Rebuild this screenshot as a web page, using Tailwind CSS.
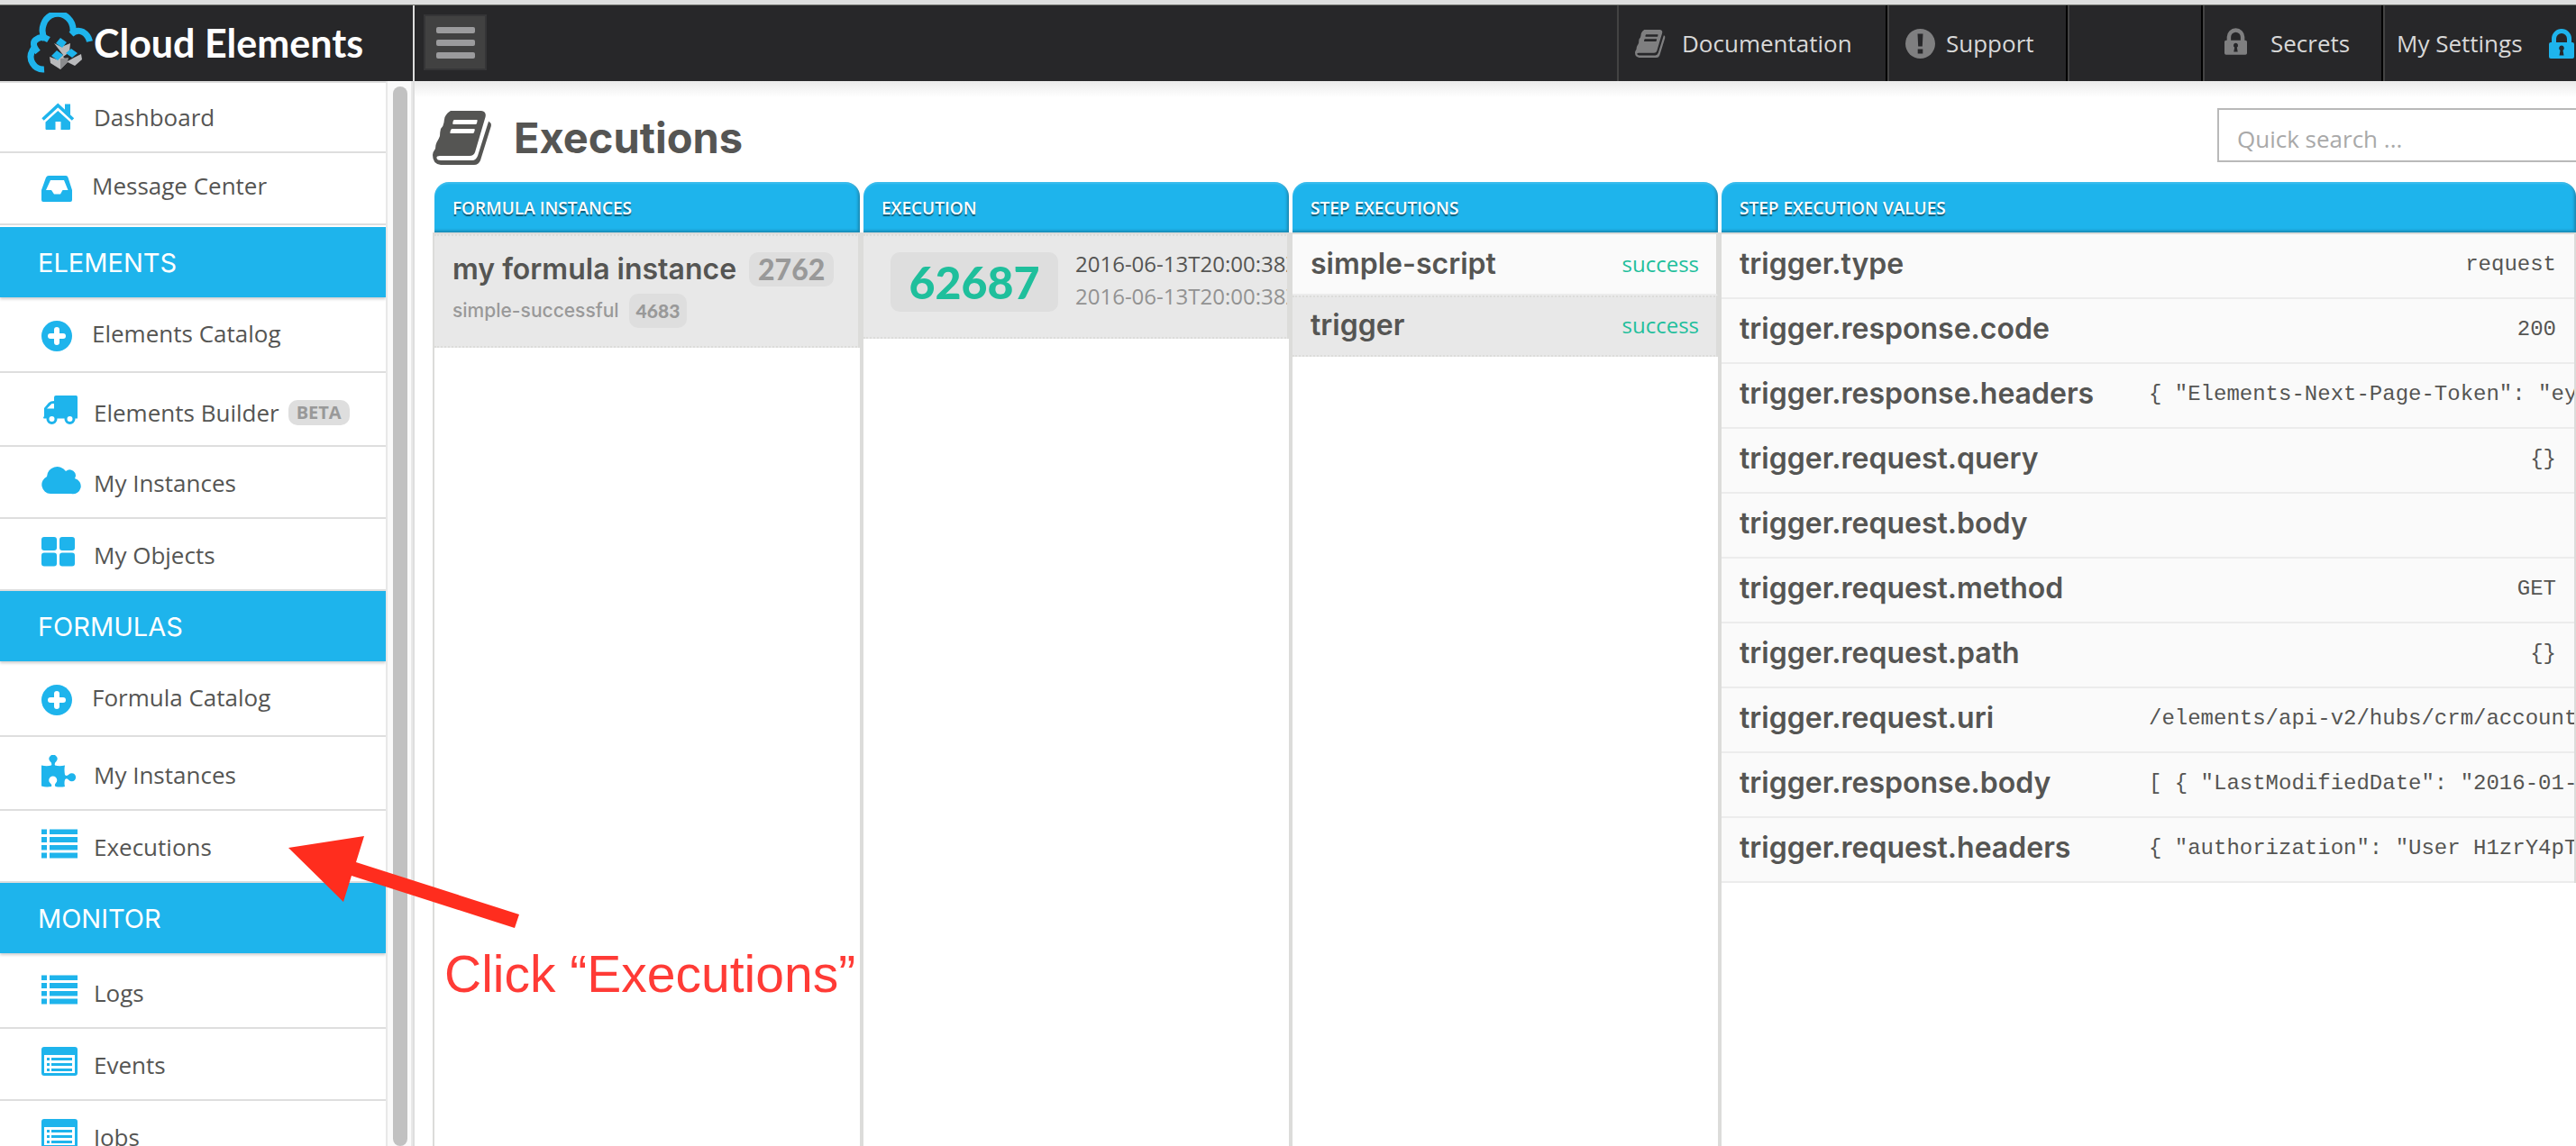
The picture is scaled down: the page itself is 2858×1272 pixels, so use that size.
<!DOCTYPE html>
<html lang="en">
<head>
<meta charset="utf-8">
<meta name="viewport" content="width=device-width, initial-scale=1">
<title>Cloud Elements - Executions</title>
<script src="https://cdn.jsdelivr.net/npm/@tailwindcss/browser@4"></script>
</head>
<body class="relative flex h-screen flex-col overflow-hidden bg-white font-['Open_Sans',sans-serif] text-[26px] leading-[36px] text-[#555553]">

<svg class="hidden" aria-hidden="true">
  <symbol id="book" viewBox="0 0 66 60">
    <path fill="currentColor" d="M20 0H54Q60 1 58.500 7L47 46Q45.500 50 41 50H8Q4 50 4.500 52.500Q5 55 9 55H44Q48 55 50 50L61 15Q62 12.500 62 11.500Q66 14 64.500 18L53 55Q51 60 46 60H9Q0 59 0 49Q0 46 3 42Q3 38 4.500 35Q7 31 8 28Q8 24 9 20Q12 17 12.500 13Q13 9 13.500 7Q16 2 20 0Z"/>
    <path class="fill-(--line)" d="M24 10H49Q50 10 49.500 11.500L49 14Q48.500 15 47.500 15H23Q22 15 22.300 13.500L22.700 11.500Q23 10 24 10ZM21.500 20H46Q47 20 46.700 21.500L46 24Q45.500 25 44.500 25H20.500Q19 25 19.500 23.500L20 21.500Q20.500 20 21.500 20Z"/>
  </symbol>
  <symbol id="lock" viewBox="0 0 28 33">
    <path fill="currentColor" fill-rule="evenodd" d="M3 15V11A11 11 0 0 1 25 11V15H26Q28 15 28 17V31Q28 33 26 33H2Q0 33 0 31V17Q0 15 2 15ZM8 15H20V11A6 6 0 0 0 8 11ZM14 18.500A3 3 0 0 0 12.500 24L11.500 29.500H16.500L15.500 24A3 3 0 0 0 14 18.500Z"/>
  </symbol>
  <symbol id="plus" viewBox="0 -4 44 44">
    <circle cx="17" cy="21" r="17" fill="currentColor"/>
    <path stroke="#fff" stroke-width="6" stroke-linecap="round" d="M17 14V28M10 21H24"/>
  </symbol>
  <symbol id="list" viewBox="0 -4 44 44">
    <path fill="currentColor" d="M0-1.500h6v5.500H0zM9-1.500h31v5.500H9zM0 7h6v6H0zM9 7h31v6H9zM0 16h6v5.500H0zM9 16h31v5.500H9zM0 24.500h6v6H0zM9 24.500h31v6H9z"/>
  </symbol>
  <symbol id="listalt" viewBox="0 -4 44 44">
    <path fill="currentColor" fill-rule="evenodd" d="M3-2H37Q40-2 40 1V27Q40 30 37 30H3Q0 30 0 27V1Q0-2 3-2ZM3 7V27H37V7ZM6 10H9V13H6ZM11 10H34V13H11ZM6 16H9V19H6ZM11 16H34V19H11ZM6 22H9V25H6ZM11 22H34V25H11Z"/>
  </symbol>
</svg>

<div class="h-[6px] shrink-0 border-b border-[#6f716c] bg-[#dedede]"></div>

<header class="flex h-[84px] shrink-0 bg-[#272729] text-[#d8d8d8]">
  <a href="#" class="flex w-[460px] shrink-0 items-center border-r-2 border-[#dedede] pl-[26px]">
    <svg class="h-[68px] w-[78px] shrink-0" viewBox="26 13 78 68" fill="none">
      <g stroke="#1eb4ec" stroke-width="7">
        <path d="M49 76A14 14 0 0 1 36 55Q37 53 38.500 52"/>
        <path d="M42 57Q34 47 40 43Q46 38 54 43"/>
        <path d="M50 43A17 18.500 0 1 1 81 35"/>
        <path d="M79 37Q85 31 92 34.500Q98 38 99.500 45"/>
      </g>
      <path fill="#b9babc" d="M60 47L68 51L78 47L77 57L70 62L75 67L82 63L90 59L91 65L83 72L75 68L67 76L56 69L55 62L63 65L70 60Z"/>
      <path fill="#8b8c8e" d="M67 64L76 63L75 68L67 76Z"/>
      <path fill="#1eb4ec" d="M67 41L74 46L69 52L62 47ZM63 55L70 60L64 66L57 61ZM79 53L86 58L80 63L73 58Z"/>
    </svg>
    <span class="font-['Lato',sans-serif] text-[43px] font-bold leading-[48px] text-white">Cloud Elements</span>
  </a>
  <button type="button" aria-label="Toggle menu" class="mt-[10px] ml-[10px] flex h-[62px] w-[70px] flex-col items-center justify-center gap-[7px] border-2 border-[#353537] bg-[#414141]">
    <span class="h-[7px] w-[43px] rounded-xs bg-[#9b9b9d]"></span>
    <span class="h-[7px] w-[43px] rounded-xs bg-[#9b9b9d]"></span>
    <span class="h-[7px] w-[43px] rounded-xs bg-[#9b9b9d]"></span>
  </button>
  <nav class="ml-auto flex" aria-label="Account">
    <a href="#" class="flex w-[300px] items-center border-r-2 border-l-2 border-r-black border-l-[#434343] pl-[18px]">
      <svg class="mr-[18px] h-[33px] w-[34px] text-[#7f7f80] [--line:#272729]"><use href="#book"/></svg>Documentation</a>
    <a href="#" class="flex w-[200px] items-center border-r-2 border-l-2 border-r-black border-l-[#434343] pl-[18px]">
      <svg class="mr-[12px] h-[33px] w-[33px]" viewBox="0 0 33 33"><circle cx="16.500" cy="16.500" r="16.500" fill="#7f7f80"/><path fill="#272729" d="M13.500 5.500h6l-.700 14h-4.600zM13.700 22.500h5.600v5h-5.600z"/></svg>Support</a>
    <span class="w-[150px] border-r-2 border-l-2 border-r-black border-l-[#434343]"></span>
    <a href="#" class="flex w-[200px] items-center border-r-2 border-l-2 border-r-black border-l-[#434343] pl-[22px]">
      <svg class="mr-[26px] mb-1 h-[30px] w-[25px] text-[#7f7f80]"><use href="#lock"/></svg>Secrets</a>
    <a href="#" class="flex w-[214px] items-center justify-between border-l-2 border-[#434343] pr-[2px] pl-[13px]">My Settings
      <svg class="h-[33px] w-[28px] text-[#1eb4ec]"><use href="#lock"/></svg></a>
  </nav>
</header>

<div class="flex min-h-0 flex-1">
  <aside class="flex w-[460px] shrink-0 border-r-2 border-[#dedede]">
    <nav class="flex-1 overflow-hidden border-t-2 border-[#dedede]" aria-label="Main">
      <a href="#" class="flex h-[78px] border-b-2 border-[#dedede] pt-[16px] pl-[46px] leading-[44px]">
        <svg class="mr-[14px] h-[44px] w-[44px] text-[#1eb4ec]" viewBox="0 -4 44 44"><path stroke="currentColor" stroke-width="3.500" fill="none" d="M1.500 20.500L18.300 5L35 20.500"/><path fill="currentColor" d="M26 3.500H32V16L26 10.500ZM18.300 11L32 23.500V31Q32 32 31 32H21.500V23H15.500V32H5.500Q4.500 32 4.500 31V23.500Z"/></svg>Dashboard</a>
      <a href="#" class="flex h-[80px] border-b-2 border-[#dedede] pt-[14px] pl-[46px] leading-[44px]">
        <svg class="mr-[12px] h-[44px] w-[44px] text-[#1eb4ec]" viewBox="0 -4 44 44"><path fill="currentColor" fill-rule="evenodd" d="M8 7H27Q29 7 29.500 9L34 23V34Q34 36 32 36H2Q0 36 0 34V23L5 9Q6 7 8 7ZM10 12L5 23H11L14 27.500H21L23.500 23H29.500L25 12Z"/></svg>Message Center</a>
      <h2 class="relative mt-[2px] h-[78px] bg-[#1eb4ec] pl-[42px] font-['Inter',sans-serif] text-[29px] leading-[80px] text-white shadow-[0_2px_3px_rgba(0,0,0,0.2)]">ELEMENTS</h2>
      <a href="#" class="flex h-[84px] border-b-2 border-[#dedede] pt-[18px] pl-[46px] leading-[44px]">
        <svg class="mr-[12px] h-[44px] w-[44px] text-[#1eb4ec]"><use href="#plus"/></svg>Elements Catalog</a>
      <a href="#" class="flex h-[82px] border-b-2 border-[#dedede] pt-[22px] pl-[46px] leading-[44px]">
        <svg class="mr-[14px] h-[44px] w-[44px] text-[#1eb4ec]" viewBox="0 -4 44 44"><path fill="currentColor" fill-rule="evenodd" d="M16-1H38.500Q40 -1 40 1V24.500H3Q1 24.500 3 22V13L8 7Q10 5 14 5V1Q14-1 16-1ZM6 13.500H14V8H11.500Z"/><g fill="#fff" stroke="currentColor" stroke-width="3"><circle cx="11.500" cy="25" r="4.500"/><circle cx="31.500" cy="25" r="4.500"/></g></svg>Elements Builder
        <span class="mt-[8px] ml-[10px] h-[28px] rounded-[10px] bg-[#dedede] px-[9px] text-[20px] leading-[28px] font-bold text-[#999]">BETA</span></a>
      <a href="#" class="flex h-[80px] border-b-2 border-[#dedede] pt-[18px] pl-[46px] leading-[44px]">
        <svg class="mr-[14px] h-[44px] w-[44px] text-[#1eb4ec]" viewBox="0 -4 44 44"><path fill="currentColor" d="M10 30A10 10 0 0 1 6 11A11.500 11.500 0 0 1 27 5A6.500 6.500 0 0 1 37 13A8.600 8.600 0 0 1 33 30Z"/></svg>My Instances</a>
      <a href="#" class="flex h-[80px] border-b-2 border-[#dedede] pt-[18px] pl-[46px] leading-[44px]">
        <svg class="mr-[14px] h-[44px] w-[44px] text-[#1eb4ec]" viewBox="0 -4 44 44" fill="currentColor"><rect y="-2" width="17" height="15" rx="3"/><rect x="20" y="-2" width="17" height="15" rx="3"/><rect y="15.500" width="17" height="15" rx="3"/><rect x="20" y="15.500" width="17" height="15" rx="3"/></svg>My Objects</a>
      <h2 class="relative h-[78px] bg-[#1eb4ec] pl-[42px] font-['Inter',sans-serif] text-[29px] leading-[80px] text-white shadow-[0_2px_3px_rgba(0,0,0,0.2)]">FORMULAS</h2>
      <a href="#" class="flex h-[84px] border-b-2 border-[#dedede] pt-[18px] pl-[46px] leading-[44px]">
        <svg class="mr-[12px] h-[44px] w-[44px] text-[#1eb4ec]"><use href="#plus"/></svg>Formula Catalog</a>
      <a href="#" class="flex h-[82px] border-b-2 border-[#dedede] pt-[20px] pl-[46px] leading-[44px]">
        <svg class="mr-[14px] h-[44px] w-[44px] text-[#1eb4ec]" viewBox="0 -4 44 44"><path fill="currentColor" d="M0 7.500Q6 9 11 7.500Q12 5 9.500 3A4.500 4.500 0 1 1 16.500 3Q14 5 15 7.500Q20 9 26 7.500Q25 12 26 18Q28 20 30.500 17.500A4.500 4.500 0 1 1 30.500 24Q28 21 26 23.500Q25 27 26 31Q21 32 15.500 31Q14 29 16 27A4.500 4.500 0 1 0 9.500 27Q12 29 11 31Q5 32 0 30.500Z"/></svg>My Instances</a>
      <a href="#" class="flex h-[80px] border-b-2 border-[#dedede] pt-[18px] pl-[46px] leading-[44px]">
        <svg class="mr-[14px] h-[44px] w-[44px] text-[#1eb4ec]"><use href="#list"/></svg>Executions</a>
      <h2 class="relative h-[78px] bg-[#1eb4ec] pl-[42px] font-['Inter',sans-serif] text-[29px] leading-[80px] text-white shadow-[0_2px_3px_rgba(0,0,0,0.2)]">MONITOR</h2>
      <a href="#" class="flex h-[84px] border-b-2 border-[#dedede] pt-[22px] pl-[46px] leading-[44px]">
        <svg class="mr-[14px] h-[44px] w-[44px] text-[#1eb4ec]"><use href="#list"/></svg>Logs</a>
      <a href="#" class="flex h-[80px] border-b-2 border-[#dedede] pt-[18px] pl-[46px] leading-[44px]">
        <svg class="mr-[14px] h-[44px] w-[44px] text-[#1eb4ec]"><use href="#listalt"/></svg>Events</a>
      <a href="#" class="flex h-[80px] border-b-2 border-[#dedede] pt-[18px] pl-[46px] leading-[44px]">
        <svg class="mr-[14px] h-[44px] w-[44px] text-[#1eb4ec]"><use href="#listalt"/></svg>Jobs</a>
    </nav>
    <div class="w-[30px] border-x-2 border-[#e8e8e8] bg-[#fafafa] px-[6px] pt-[6px]">
      <div class="h-full w-[16px] rounded-full bg-[#c1c1c1]"></div>
    </div>
  </aside>

  <main class="flex min-w-0 flex-1 flex-col bg-linear-to-b from-[#ebebeb] to-white to-[18px] pl-[20px]">
    <div class="flex h-[112px] shrink-0 items-start">
      <svg class="mt-[33px] h-[60px] w-[66px] [--line:#fff]"><use href="#book"/></svg>
      <h1 class="mt-[35px] ml-[24px] font-['Inter',sans-serif] text-[47px] leading-[56px] font-bold">Executions</h1>
      <input type="search" aria-label="Quick search" placeholder="Quick search ..." class="mt-[30px] ml-auto h-[60px] w-[398px] border-2 border-r-0 border-[#b9b9b9] bg-white pt-[8px] pl-[20px] placeholder:text-[#a9a9a9]">
    </div>

    <div class="flex min-h-0 flex-1">
      <section class="flex w-[476px] shrink-0 flex-col">
        <h2 class="mx-[2px] h-[56px] shrink-0 rounded-t-[16px] bg-[#1eb4ec] pl-[20px] text-[19px] leading-[58px] font-semibold text-white shadow-[inset_-2px_-2px_3px_rgba(0,0,0,0.25),inset_0_2px_2px_rgba(255,255,255,0.15)] text-shadow-[0_2px_1px_rgba(0,0,0,0.5)]">FORMULA INSTANCES</h2>
        <div class="min-h-0 flex-1 border-x-2 border-t-2 border-[#dcdcda]">
          <a href="#" class="flex h-[126px] flex-col gap-[8px] border-y-2 border-r-2 border-[#dcdcda] bg-[#e8e8e8] [border-block-style:dotted] pt-[18px] pl-[20px] font-['Inter',sans-serif]">
            <span class="flex h-[38px] gap-[14px] text-[32px] leading-[38px] font-semibold">my formula instance
              <b class="rounded-[10px] bg-[#dedede] px-[10px] font-['Lato',sans-serif] font-black text-[#999]">2762</b></span>
            <span class="flex h-[38px] gap-[11px] text-[21px] leading-[38px] font-medium text-[#999]">simple-successful
              <b class="rounded-[10px] bg-[#dedede] px-[8px] font-['Lato',sans-serif] font-black">4683</b></span>
          </a>
        </div>
      </section>

      <section class="flex w-[476px] shrink-0 flex-col">
        <h2 class="mx-[2px] h-[56px] shrink-0 rounded-t-[16px] bg-[#1eb4ec] pl-[20px] text-[19px] leading-[58px] font-semibold text-white shadow-[inset_-2px_-2px_3px_rgba(0,0,0,0.25),inset_0_2px_2px_rgba(255,255,255,0.15)] text-shadow-[0_2px_1px_rgba(0,0,0,0.5)]">EXECUTION</h2>
        <div class="min-h-0 flex-1 border-x-2 border-t-2 border-[#dcdcda]">
          <a href="#" class="flex h-[116px] gap-[19px] overflow-hidden border-y-2 border-r-2 border-[#dcdcda] bg-[#e8e8e8] [border-block-style:dotted] pt-[13px] pl-[30px] text-[24px]">
            <b class="mt-[5px] h-[66px] w-[186px] shrink-0 rounded-[10px] bg-[#dedede] text-center font-['Lato',sans-serif] text-[50px] leading-[66px] font-black text-[#1fbf9c]">62687</b>
            <span class="flex shrink-0 flex-col whitespace-nowrap"><span>2016-06-13T20:00:38Z</span><span class="text-[#929292]">2016-06-13T20:00:38Z</span></span>
          </a>
        </div>
      </section>

      <section class="flex w-[476px] shrink-0 flex-col">
        <h2 class="mx-[2px] h-[56px] shrink-0 rounded-t-[16px] bg-[#1eb4ec] pl-[20px] text-[19px] leading-[58px] font-semibold text-white shadow-[inset_-2px_-2px_3px_rgba(0,0,0,0.25),inset_0_2px_2px_rgba(255,255,255,0.15)] text-shadow-[0_2px_1px_rgba(0,0,0,0.5)]">STEP EXECUTIONS</h2>
        <div class="min-h-0 flex-1 border-x-2 border-t-2 border-[#dcdcda]">
          <a href="#" class="flex h-[68px] items-center justify-between border-r-2 border-b-2 border-r-[#dcdcda] border-b-[#ececec] bg-[#fafafa] pr-[19px] pl-[20px]">
            <span class="font-['Inter',sans-serif] text-[32px] font-semibold">simple-script</span>
            <span class="text-[24px] text-[#1fbf9c]">success</span></a>
          <a href="#" class="flex h-[68px] items-center justify-between border-y-2 border-r-2 border-[#dcdcda] bg-[#e8e8e8] [border-block-style:dotted] pr-[19px] pb-[2px] pl-[20px]">
            <span class="font-['Inter',sans-serif] text-[32px] font-semibold">trigger</span>
            <span class="text-[24px] text-[#1fbf9c]">success</span></a>
        </div>
      </section>

      <section class="flex min-w-0 flex-1 flex-col">
        <h2 class="ml-[2px] h-[56px] shrink-0 rounded-t-[16px] bg-[#1eb4ec] pl-[20px] text-[19px] leading-[58px] font-semibold text-white shadow-[inset_-2px_-2px_3px_rgba(0,0,0,0.25),inset_0_2px_2px_rgba(255,255,255,0.15)] text-shadow-[0_2px_1px_rgba(0,0,0,0.5)]">STEP EXECUTION VALUES</h2>
        <div class="min-h-0 flex-1 border-t-2 border-l-2 border-[#dcdcda]">
          <table class="w-full table-fixed border-separate border-spacing-0 border-r-2 border-[#dcdcda] bg-[#fafafa] text-left font-['Liberation_Mono',monospace] text-[24px] whitespace-nowrap [&_td]:h-[72px] [&_td]:overflow-hidden [&_td]:border-b-2 [&_td]:border-[#ececec] [&_td]:pb-[2px] [&_th]:h-[72px] [&_th]:w-[474px] [&_th]:border-b-2 [&_th]:border-[#ececec] [&_th]:pb-[4px] [&_th]:pl-[20px] [&_th]:font-['Inter',sans-serif] [&_th]:text-[32px] [&_th]:font-semibold">
            <tbody>
              <tr><th scope="row">trigger.type</th><td class="pr-[20px] text-right">request</td></tr>
              <tr><th scope="row">trigger.response.code</th><td class="pr-[20px] text-right">200</td></tr>
              <tr><th scope="row">trigger.response.headers</th><td>{ "Elements-Next-Page-Token": "eyJ</td></tr>
              <tr><th scope="row">trigger.request.query</th><td class="pr-[20px] text-right">{}</td></tr>
              <tr><th scope="row">trigger.request.body</th><td></td></tr>
              <tr><th scope="row">trigger.request.method</th><td class="pr-[20px] text-right">GET</td></tr>
              <tr><th scope="row">trigger.request.path</th><td class="pr-[20px] text-right">{}</td></tr>
              <tr><th scope="row">trigger.request.uri</th><td>/elements/api-v2/hubs/crm/accounts</td></tr>
              <tr><th scope="row">trigger.response.body</th><td>[ { "LastModifiedDate": "2016-01-1</td></tr>
              <tr><th scope="row">trigger.request.headers</th><td>{ "authorization": "User H1zrY4pTf</td></tr>
            </tbody>
          </table>
        </div>
      </section>
    </div>
  </main>
</div>

<!-- Tutorial annotation laid over the page -->
<svg class="absolute top-[928px] left-[320px] h-[102px] w-[256px]" viewBox="0 0 256 102" aria-hidden="true"><path fill="#ff2d1e" d="M0 13L84 0L75 29L256 87L251 102L70 44L61 73Z"/></svg>
<p class="absolute top-[1049px] left-[493px] font-['Liberation_Sans',sans-serif] text-[57px] leading-[64px] whitespace-nowrap text-[#ff3b36]">Click “Executions”</p>
</body>
</html>
